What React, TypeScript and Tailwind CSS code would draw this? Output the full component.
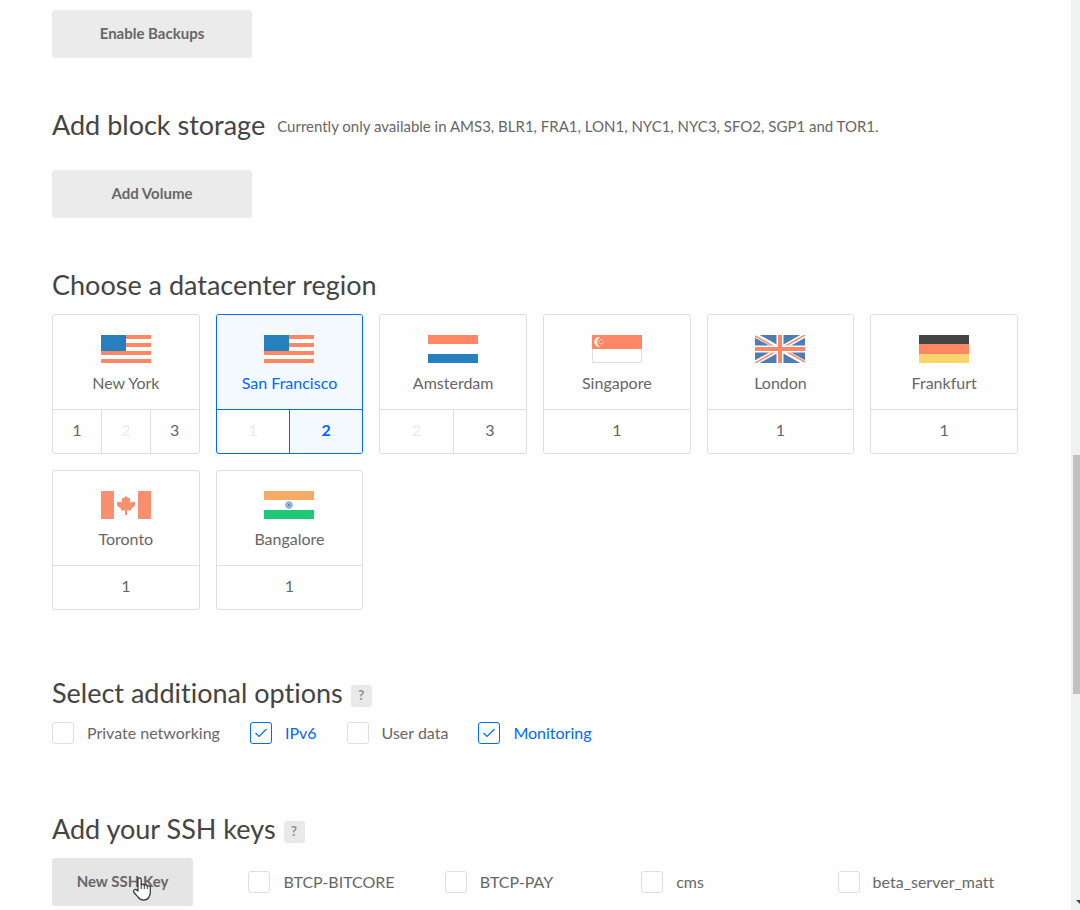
import { useState } from "react";
import type { ReactNode } from "react";

const RED = "#ff8766";
const BLUE = "#2580bd";

function Flag({ title, children }: { title: string; children: ReactNode }) {
  return (
    <svg role="img" aria-label={title} width="50" height="28" viewBox="0 0 50 28" className="block">
      {children}
    </svg>
  );
}

function UsFlag() {
  return (
    <Flag title="United States">
      <path fill="#fff" d="M0 0h50v28H0z" />
      <path fill={RED} d="M0 0h50v4H0zM0 8h50v4H0zM0 16h50v4H0zM0 24h50v4H0z" />
      <path fill={BLUE} d="M0 0h25v16H0z" />
    </Flag>
  );
}

function NetherlandsFlag() {
  return (
    <Flag title="Netherlands">
      <path fill={RED} d="M0 0h50v9H0z" />
      <path fill="#fff" d="M0 9h50v10H0z" />
      <path fill={BLUE} d="M0 19h50v9H0z" />
    </Flag>
  );
}

function SingaporeFlag() {
  return (
    <Flag title="Singapore">
      <path fill="#fff" stroke="#dedede" d="M.5 .5h49v27H.5z" />
      <path fill={RED} d="M0 0h50v14H0z" />
      <path fill="#fff3e0" d="M8 2.200a4.900 4.900 0 1 0 0 9.600A5.600 5.600 0 0 1 8 2.200z" />
      <g fill="#fff3e0">
        <circle cx="9.200" cy="4.800" r=".7" />
        <circle cx="11.200" cy="6.300" r=".7" />
        <circle cx="7.400" cy="6.300" r=".7" />
        <circle cx="8" cy="8.600" r=".7" />
        <circle cx="10.400" cy="8.600" r=".7" />
      </g>
    </Flag>
  );
}

function UkFlag() {
  return (
    <Flag title="United Kingdom">
      <path fill="#4d7db5" d="M0 0h50v28H0z" />
      <path stroke="#fff" strokeWidth="4.600" d="M0 0l50 28M50 0L0 28" />
      <path stroke={RED} strokeWidth="1.500" d="M0 1l23 13M50 0L27 13M0 28l23-13M50 27L27 14" />
      <path fill="#fff" d="M21.500 0h7v28h-7zM0 10.500h50v7H0z" />
      <path fill={RED} d="M23 0h4v28h-4zM0 12h50v4H0z" />
    </Flag>
  );
}

function GermanyFlag() {
  return (
    <Flag title="Germany">
      <path fill="#444" d="M0 0h50v9H0z" />
      <path fill={RED} d="M0 9h50v10H0z" />
      <path fill="#f9d66c" d="M0 19h50v9H0z" />
    </Flag>
  );
}

function CanadaFlag() {
  return (
    <Flag title="Canada">
      <path fill="#fff" d="M0 0h50v28H0z" />
      <path fill="#f88f6e" d="M0 0h13v28H0zM37 0h13v28H37z" />
      <path
        fill="#f88f6e"
        d="M25 5l2 1.700 2 .6v4h1.500l3.500-.5v3.500l-1 1.200-3.200 2.500.2 1.700-4-.4v4.700h-2v-4.700l-4 .4.200-1.700-3.200-2.500-1-1.200v-3.500l3.500.5H21v-4l2-.6z"
      />
    </Flag>
  );
}

function IndiaFlag() {
  return (
    <Flag title="India">
      <path fill="#f5aa66" d="M0 0h50v9H0z" />
      <path fill="#fff" d="M0 9h50v10H0z" />
      <path fill="#1fc878" d="M0 19h50v9H0z" />
      <circle cx="25" cy="14" r="3.400" fill="#b9d0ec" stroke="#8db0dd" />
      <path stroke="#5f92d0" strokeWidth=".7" d="M25 11v6M22 14h6M23 12l4 4M27 12l-4 4" />
      <circle cx="25" cy="14" r="1" fill="#4a80c4" />
    </Flag>
  );
}

type Region = { name: string; flag: ReactNode; slots: { n: number; off?: boolean }[] };

const regions: Region[] = [
  { name: "New York", flag: <UsFlag />, slots: [{ n: 1 }, { n: 2, off: true }, { n: 3 }] },
  { name: "San Francisco", flag: <UsFlag />, slots: [{ n: 1, off: true }, { n: 2 }] },
  { name: "Amsterdam", flag: <NetherlandsFlag />, slots: [{ n: 2, off: true }, { n: 3 }] },
  { name: "Singapore", flag: <SingaporeFlag />, slots: [{ n: 1 }] },
  { name: "London", flag: <UkFlag />, slots: [{ n: 1 }] },
  { name: "Frankfurt", flag: <GermanyFlag />, slots: [{ n: 1 }] },
  { name: "Toronto", flag: <CanadaFlag />, slots: [{ n: 1 }] },
  { name: "Bangalore", flag: <IndiaFlag />, slots: [{ n: 1 }] },
];

function RegionCard({
  region,
  picked,
  onPick,
}: {
  region: Region;
  picked: number | null;
  onPick: (n: number) => void;
}) {
  const active = picked !== null;
  const line = active ? "border-[#0069ff]" : "border-[#dedede]";
  return (
    <li className={`overflow-hidden rounded-[3px] border ${line}`}>
      <div className={`flex flex-col items-center pt-5 pb-[14px] ${active ? "bg-[#f4f8ff] text-[#0069ff]" : ""}`}>
        {region.flag}
        <h3 className="mt-2 leading-6">{region.name}</h3>
      </div>
      <div className={`flex border-t ${line}`}>
        {region.slots.map((slot, i) => {
          const on = picked === slot.n;
          const tone = slot.off ? "text-[#ebebeb]" : on ? "bg-[#f4f8ff] font-bold text-[#0069ff]" : "";
          return (
            <button
              key={slot.n}
              type="button"
              disabled={slot.off}
              aria-pressed={on}
              aria-label={`${region.name} ${slot.n}`}
              onClick={() => onPick(slot.n)}
              className={`h-[43px] flex-1 pb-1 ${i > 0 ? `border-l ${line}` : ""} ${tone}`}
            >
              {slot.n}
            </button>
          );
        })}
      </div>
    </li>
  );
}

function Check({ label, defaultChecked = false }: { label: string; defaultChecked?: boolean }) {
  return (
    <label className="flex items-center gap-[13px] leading-[22px] has-checked:text-[#0069ff]">
      <span className="grid shrink-0">
        <input
          type="checkbox"
          defaultChecked={defaultChecked}
          className="peer col-start-1 row-start-1 size-[22px] appearance-none rounded-[3px] border border-[#dedede] checked:border-[#0069ff]"
        />
        <svg
          viewBox="0 0 22 22"
          fill="none"
          stroke="#0069ff"
          strokeWidth="1.2"
          className="pointer-events-none invisible col-start-1 row-start-1 size-[22px] peer-checked:visible"
        >
          <path d="M5.500 11l3.500 3.500 7.500-7.500" />
        </svg>
      </span>
      {label}
    </label>
  );
}

function Heading({ children }: { children: ReactNode }) {
  return <h2 className="pb-[2px] text-[27px] leading-[38px] text-[#444]">{children}</h2>;
}

function Help({ about }: { about: string }) {
  return (
    <button
      type="button"
      aria-label={about}
      className="mt-1 h-[22px] w-[21px] rounded-[3px] bg-[#e9e9e9] text-[13px] font-bold text-[#8c8c8c]"
    >
      ?
    </button>
  );
}

function HandCursor() {
  return (
    <svg
      aria-hidden="true"
      width="19"
      height="24"
      viewBox="0 0 19 24"
      className="pointer-events-none absolute top-[19px] left-[81px]"
    >
      <path
        fill="#fff"
        stroke="#2b303b"
        strokeWidth="1.200"
        strokeLinejoin="round"
        d="M5 14V2.500a1.600 1.600 0 0 1 3.200 0V7.800c.5-1 2.900-.8 3.100.6.600-.9 2.800-.6 3 .8.800-.8 3-.4 3 1.400V15.500c0 2.200-1 3.700-1.500 4.900-.9 1.700-2.700 2.700-5.300 2.700s-4.300-1.300-5.400-2.900L.9 15.500c-.6-1.100-.3-2.400.6-2.800 1-.5 2 0 2.600.7z"
      />
      <path stroke="#2b303b" d="M8.200 7.500v4.500M11.300 8.200V12M14.300 9.200V12" />
    </svg>
  );
}

const grayButton = "h-12 rounded-[3px] pb-[2px] text-[15px] font-bold";

export default function App() {
  const [choice, setChoice] = useState({ region: "San Francisco", n: 2 });
  return (
    <div className="flex min-h-screen bg-[#fefefe] font-['Lato',sans-serif] text-[16px] text-[#676767] [font-variant-ligatures:none]">
      <main className="min-w-0 flex-1 pt-[10px] pr-[53px] pb-1 pl-[52px]">
        <button type="button" className={`w-[200px] bg-[#ebebeb] ${grayButton}`}>
          Enable Backups
        </button>

        <section className="mt-12">
          <div className="flex items-center gap-3">
            <Heading>Add block storage</Heading>
            <p className="text-[15px]">
              Currently only available in AMS3, BLR1, FRA1, LON1, NYC1, NYC3, SFO2, SGP1 and TOR1.
            </p>
          </div>
          <button type="button" className={`mt-6 w-[200px] bg-[#ebebeb] ${grayButton}`}>
            Add Volume
          </button>
        </section>

        <section className="mt-12">
          <Heading>Choose a datacenter region</Heading>
          <ul className="mt-2 grid grid-cols-6 gap-4">
            {regions.map((region) => (
              <RegionCard
                key={region.name}
                region={region}
                picked={choice.region === region.name ? choice.n : null}
                onPick={(n) => setChoice({ region: region.name, n })}
              />
            ))}
          </ul>
        </section>

        <section className="mt-16">
          <div className="flex items-center gap-2">
            <Heading>Select additional options</Heading>
            <Help about="About additional options" />
          </div>
          <div className="mt-2 flex gap-[30px]">
            <Check label="Private networking" />
            <Check label="IPv6" defaultChecked />
            <Check label="User data" />
            <Check label="Monitoring" defaultChecked />
          </div>
        </section>

        <section className="mt-[66px]">
          <div className="flex items-center gap-2">
            <Heading>Add your SSH keys</Heading>
            <Help about="About SSH keys" />
          </div>
          <div className="mt-2 grid grid-cols-5 items-center gap-4">
            <div className="relative w-[141px]">
              <button type="button" className={`w-full bg-[#e5e5e5] ${grayButton}`}>
                New SSH Key
              </button>
              <HandCursor />
            </div>
            <Check label="BTCP-BITCORE" />
            <Check label="BTCP-PAY" />
            <Check label="cms" />
            <Check label="beta_server_matt" />
          </div>
        </section>
      </main>

      <div aria-hidden="true" className="flex w-[9px] flex-col items-end overflow-hidden bg-[#f0f2f1] pt-[455px]">
        <div className="h-[239px] w-[7px] bg-[#c1c1c1]" />
        <svg width="4" height="5" viewBox="0 0 4 5" className="mt-auto mb-[5px]">
          <path fill="#444" d="M0 0h4v4z" />
        </svg>
      </div>
    </div>
  );
}
